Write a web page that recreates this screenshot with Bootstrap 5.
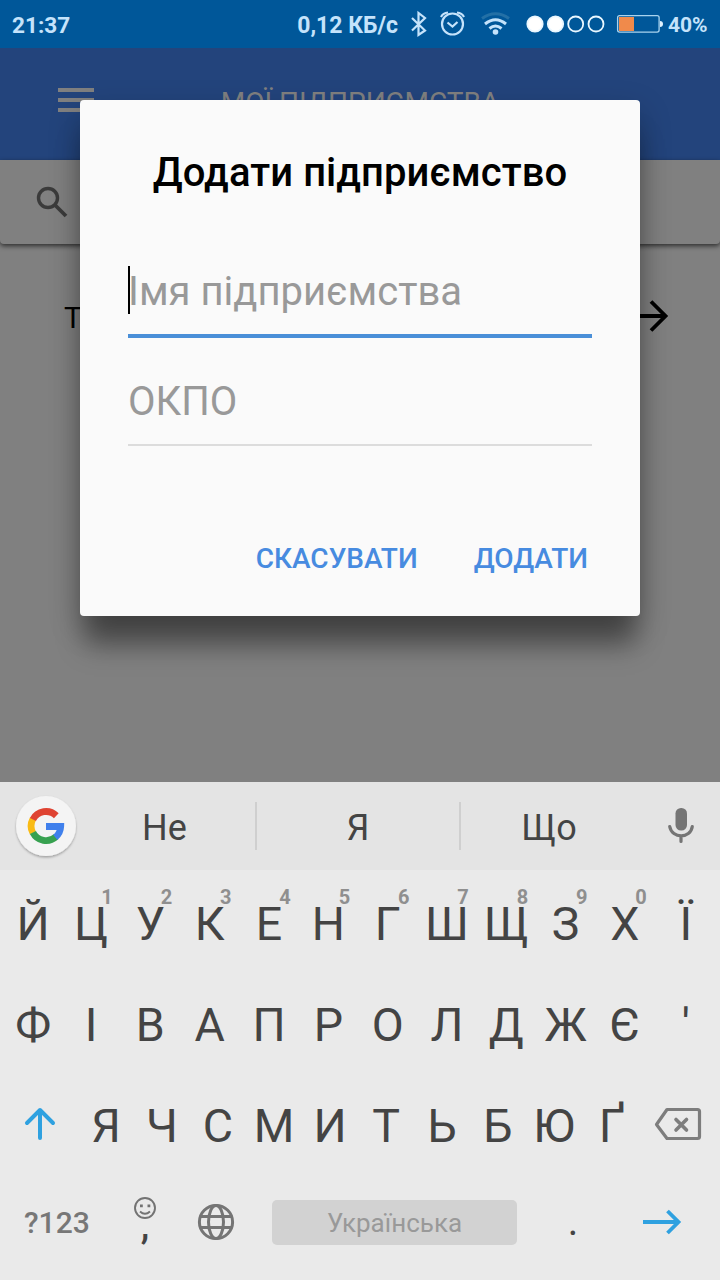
<!DOCTYPE html>
<html lang="uk">
<head>
<meta charset="utf-8">
<meta name="viewport" content="width=device-width, initial-scale=1">
<title>Мої підприємства</title>
<link href="https://cdn.jsdelivr.net/npm/bootstrap@5.3.0/dist/css/bootstrap.min.css" rel="stylesheet">
<style>
  body { font-family: Roboto, "Noto Sans", sans-serif; background: #808080; }
  svg { display: block; flex: none; }
  .screen { width: 720px; height: 1280px; }
  .status { height: 48px; background: #005799; color: #c5e3fb; font-size: 22.6px; line-height: 51px; font-weight: 700; }
  .speed { font-size: 23px; }
  .pct { width: 52px; font-size: 21px; }
  .appbar { height: 112px; background: #23447c; color: #808080; font-size: 28px; line-height: 109px; }
  .menu-btn { left: 58px; top: 40px; }
  .search { height: 84px; background: #808080; box-shadow: 0 2px 5px rgba(0,0,0,.65); border-radius: 0 0 4px 4px; padding-left: 32px; }
  .company { height: 144px; font-size: 30px; color: #000; padding: 0 48px 0 64px; }
  .company span { padding-top: 3px; }
  .layer { top: 100px; }
  .dialog { width: 560px; height: 516px; background: #fafafa; border-radius: 4px; padding: 48px; box-shadow: 0 34px 26px -5px rgba(0,0,0,.38), 0 12px 32px rgba(0,0,0,.24); }
  .dialog h1 { font-size: 40px; line-height: 48px; font-weight: 500; color: #000; padding-top: 1px; margin-bottom: 69px; letter-spacing: .08px; }
  .dialog .form-control { border: 0; border-radius: 0; background: transparent; padding: 1px 0 0; font-size: 40px; line-height: 48px; height: 49px; box-shadow: none; }
  .dialog .form-control::placeholder { color: #999; opacity: 1; }
  .field-on { height: 72px; border-bottom: 4px solid #4a8fd8; }
  .field-off { height: 70px; border-bottom: 2px solid #dcdcdc; margin-top: 38px; }
  .caret { left: 0; top: 0; width: 2px; height: 48px; background: #000; }
  .actions { margin-top: 89px; margin-right: 4px; gap: 56px; }
  .actions .btn { padding: 0; border: 0; font-size: 28px; line-height: 48px; font-weight: 500; color: #478be0; }
  .keyboard { height: 498px; background: #eaeaea; color: #444; }
  .suggest { height: 88px; background: #e4e4e4; font-size: 36px; }
  .word { height: 48px; line-height: 52px; }
  .rule { border-right: 2px solid #cfcfcf; }
  .keys { height: 101px; font-size: 46.5px; line-height: 108px; padding: 0 6px 0 2px; }
  .keys > span { flex: 1 1 0; min-width: 0; text-align: center; position: relative; }
  .keys > span:first-child, .keys > span:last-child { text-indent: 3px; }
  .keys sup { position: absolute; left: 40px; top: 15px; font-size: 20px; line-height: 24px; font-weight: 700; color: #8f8f8f; }
  .keys.row-three { padding: 0; }
  .row-three .ghe { text-indent: 4px; }
  .bottom { height: 107px; }
  .sym { width: 125px; padding-left: 24px; font-size: 30px; line-height: 99px; font-weight: 500; color: #777; }
  .comma { width: 40px; font-size: 38px; font-weight: 500; line-height: 12px; }
  .space { width: 245px; height: 45px; margin-top: 27px; background: #d2d2d2; border-radius: 5px; color: #999; font-size: 26px; line-height: 46px; }
  .dot { width: 112px; font-size: 40px; line-height: 98px; }
</style>
</head>
<body>
<div class="screen position-relative overflow-hidden d-flex flex-column">
  <header class="status d-flex">
    <span class="ps-2 ms-1">21:37</span>
    <span class="speed ms-auto me-2">0,12 КБ/с</span>
    <svg width="27" height="48" viewBox="406 0 27 48" fill="none" stroke="#c5e3fb" stroke-width="2.2"><path d="M412 18 425 30.500 418.500 35V13L425 18 412 30.500"/></svg>
    <svg width="39" height="48" viewBox="433 0 39 48" fill="none" stroke="#c5e3fb" stroke-width="2.2"><circle cx="452.500" cy="24" r="10.500"/><path d="M447.500 22.500 452.500 26.500 457.500 22M441 17Q443 13 448 12.500M464 17Q462 13 457 12.500"/></svg>
    <svg width="44" height="48" viewBox="472 0 44 48" fill="none" stroke="#c5e3fb" stroke-width="3"><path stroke="#2370a6" d="M482 18.500Q495.500 9 509 18.500"/><path d="M485 24Q495.500 15.500 506 24M489.500 28.500Q495.500 23.500 501.500 28.500"/><circle cx="495.500" cy="32" r="2.800" fill="#c5e3fb" stroke="none"/></svg>
    <svg width="96" height="48" viewBox="516 0 96 48" fill="none" stroke="#e9f7ff" stroke-width="1.800"><g fill="#fff"><circle cx="535" cy="24" r="7.700"/><circle cx="555.500" cy="24" r="7.700"/></g><circle cx="575.700" cy="24" r="7.500"/><circle cx="596" cy="24" r="7.500"/></svg>
    <svg width="56" height="48" viewBox="612 0 56 48"><rect x="617.600" y="15.600" width="41.500" height="16.500" rx="2" fill="none" stroke="#a9d3ee" stroke-width="1.300"/><path fill="#f08a4b" d="M619 17h15v14h-15z"/><path fill="#dff2ff" d="M660 21q3 0 3 3t-3 3z"/></svg>
    <span class="pct">40%</span>
  </header>

  <nav class="appbar position-relative text-center">
    <svg class="menu-btn position-absolute" width="36" height="24" viewBox="0 0 36 24" fill="#808080"><path d="M0 0h36v4H0zM0 10h36v4H0zM0 20h36v4H0z"/></svg>
    МОЇ ПІДПРИЄМСТВА
  </nav>
  <div class="search position-relative d-flex align-items-center">
    <svg width="40" height="40" viewBox="32 182 40 40" fill="none" stroke="#3b3b3b"><circle cx="48" cy="198" r="9.500" stroke-width="3.400"/><path stroke-width="3.800" d="M54.500 204.500 66 216"/></svg>
  </div>
  <div class="company d-flex align-items-center justify-content-between">
    <span>Т</span>
    <svg width="44" height="40" viewBox="628 296 44 40" fill="none" stroke="#000" stroke-width="3.800"><path d="M630 316H666M651 301.500 665.500 316 651 330.500"/></svg>
  </div>

  <section class="keyboard mt-auto">
    <div class="suggest d-flex align-items-center text-center">
      <svg width="78" height="88" viewBox="0 782 78 88" fill="none" stroke-width="6.800">
        <defs><filter id="lift" x="-20%" y="-20%" width="140%" height="140%"><feDropShadow dx="0" dy="1.500" stdDeviation="1.200" flood-opacity=".3"/></filter></defs>
        <circle cx="46" cy="826" r="30" fill="#f4f4f4" filter="url(#lift)"/>
        <path stroke="#f9bb15" d="M32.900 819A14.750 14.750 0 0 0 32.900 833"/>
        <path stroke="#df4332" d="M56.300 815.700A14.750 14.750 0 0 0 32.900 819.500"/>
        <path stroke="#37a150" d="M32.900 832.500A14.750 14.750 0 0 0 56 836.800"/>
        <path stroke="#4080ec" d="M55.300 837.400A14.750 14.750 0 0 0 60.700 826.500H46"/>
      </svg>
      <span class="word rule" style="width:179px"><span class="pe-1">Не</span></span>
      <span class="word rule" style="width:204px">Я</span>
      <span class="word" style="width:176px">Що</span>
      <svg class="ms-auto" width="78" height="88" viewBox="642 782 78 88"><rect x="675.500" y="808" width="11.500" height="22.500" rx="5.500" fill="#757575"/><path fill="none" stroke="#757575" stroke-width="3.200" stroke-linecap="round" d="M669.700 826.500C672 839 690.500 839 692.300 826.500M681 837V841.500"/></svg>
    </div>
    <div class="keys d-flex">
      <span>Й</span><span>Ц<sup>1</sup></span><span>У<sup>2</sup></span><span>К<sup>3</sup></span><span>Е<sup>4</sup></span><span>Н<sup>5</sup></span><span>Г<sup>6</sup></span><span>Ш<sup>7</sup></span><span>Щ<sup>8</sup></span><span>З<sup>9</sup></span><span>Х<sup>0</sup></span><span>Ї</span>
    </div>
    <div class="keys d-flex">
      <span>Ф</span><span>І</span><span>В</span><span>А</span><span>П</span><span>Р</span><span>О</span><span>Л</span><span>Д</span><span>Ж</span><span>Є</span><span>'</span>
    </div>
    <div class="keys row-three d-flex">
      <svg width="78" height="101" viewBox="0 1072 78 101" fill="none" stroke="#2fa1e0" stroke-width="4" stroke-linecap="round" stroke-linejoin="round"><path d="M40 1138V1110M27 1123 40 1110 53 1123"/></svg>
      <span>Я</span><span>Ч</span><span>С</span><span>М</span><span>И</span><span>Т</span><span>Ь</span><span>Б</span><span>Ю</span><span class="ghe">Ґ</span>
      <svg width="82" height="101" viewBox="638 1072 82 101" fill="none" stroke="#7d7d7d" stroke-width="3.200" stroke-linecap="round" stroke-linejoin="round"><path d="M667 1109.500H697.500Q699.500 1109.500 699.500 1111.500V1136.500Q699.500 1138.500 697.500 1138.500H667L656.500 1124.500Z"/><path stroke-width="3.600" d="M676 1119.500 686.500 1130M686.500 1119.500 676 1130"/></svg>
    </div>
    <div class="bottom d-flex">
      <span class="sym">?123</span>
      <div class="comma d-flex flex-column align-items-center">
        <svg width="40" height="46" viewBox="125 1173 40 46" fill="none" stroke="#737373" stroke-width="1.900"><circle cx="145" cy="1208" r="10"/><path d="M140 1211.500Q145 1216 150 1211.500"/><path fill="#737373" stroke="none" d="M140 1204.500h2.800v2.800h-2.800zM147.500 1204.500h2.800v2.800h-2.800z"/></svg>
        <span>,</span>
      </div>
      <svg width="107" height="107" viewBox="165 1173 107 107" fill="none" stroke="#757575" stroke-width="3"><circle cx="216" cy="1222" r="16.600"/><ellipse cx="216" cy="1222" rx="7.500" ry="16.600"/><path d="M200.500 1216.500H231.500M200.500 1227.500H231.500"/></svg>
      <span class="space text-center">Українська</span>
      <span class="dot text-center">.</span>
      <svg width="91" height="107" viewBox="629 1173 91 107" fill="none" stroke="#2fa1e0" stroke-width="3.800"><path d="M643 1222H679M667.500 1211 678.500 1222 667.500 1233"/></svg>
    </div>
  </section>

  <div class="layer position-absolute w-100 d-flex justify-content-center">
    <form class="dialog">
      <h1 class="text-center">Додати підприємство</h1>
      <div class="field-on position-relative">
        <input class="form-control" type="text" placeholder="Імя підприємства">
        <span class="caret position-absolute"></span>
      </div>
      <div class="field-off">
        <input class="form-control" type="text" placeholder="ОКПО">
      </div>
      <div class="actions d-flex justify-content-end">
        <button class="btn" type="button">СКАСУВАТИ</button>
        <button class="btn" type="button">ДОДАТИ</button>
      </div>
    </form>
  </div>
</div>
<script src="https://cdn.jsdelivr.net/npm/bootstrap@5.3.0/dist/js/bootstrap.bundle.min.js"></script>
</body>
</html>
